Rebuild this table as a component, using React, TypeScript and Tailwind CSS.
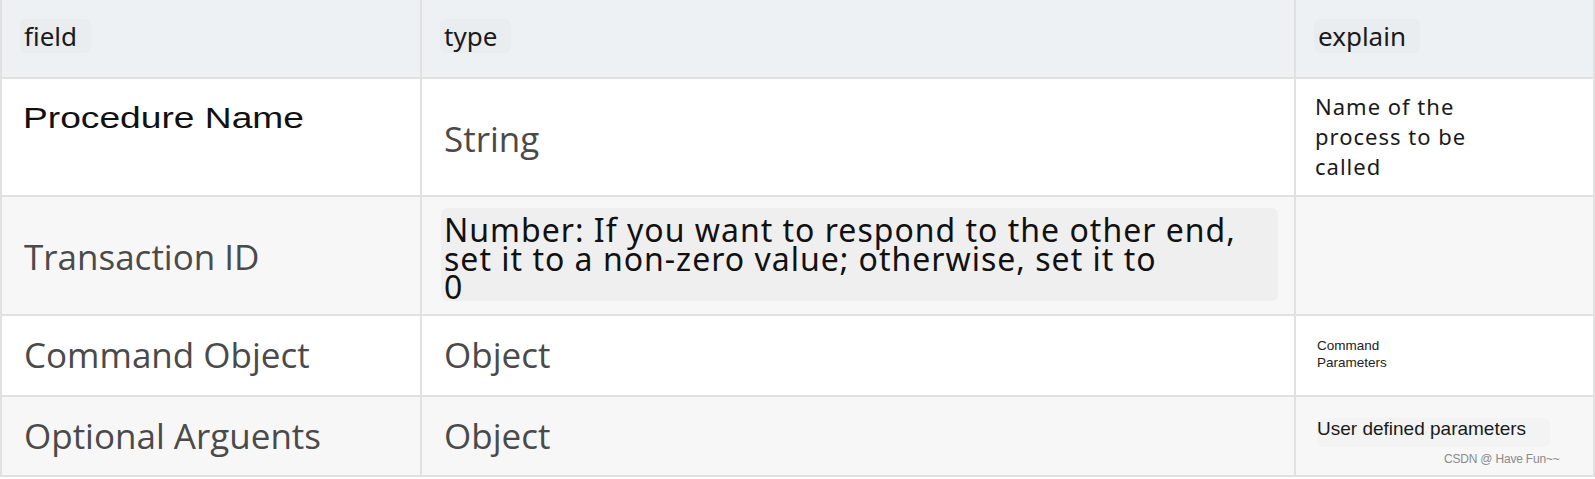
const grayText = "font-['Open_Sans',sans-serif] text-[35px] text-[#4a4a4a]";

function HeadCell({ label }: { label: string }) {
  return (
    <div className="flex items-center bg-[#eef1f4] pb-[5px] pl-[18px]">
      <span className="rounded-md bg-[#eaedf0] pl-[4px] pr-[14px] font-['Noto_Sans',sans-serif] text-[26px] leading-[34px] text-[#1a1a1a]">
        {label}
      </span>
    </div>
  );
}

export default function App() {
  return (
    <div className="h-[479px] w-[1595px] bg-white">
      <div className="grid w-[1595px] grid-cols-[418px_872px_297px] grid-rows-[77px_116px_117px_79px_78px] gap-[2px] bg-[#e1e1e1] px-[2px] pb-[2px]">
        <HeadCell label="field" />
        <HeadCell label="type" />
        <HeadCell label="explain" />

        {/* row 1 */}
        <div className="bg-white pl-[21px] pt-[24px]">
          <span className="inline-block origin-left scale-x-[1.26] font-['Liberation_Sans',sans-serif] text-[29.5px] leading-[29px] text-[#111]">
            Procedure Name
          </span>
        </div>
        <div className={`flex items-center bg-white pl-[22px] pt-[4px] ${grayText}`}>String</div>
        <div className="bg-white pl-[19px] pt-[12px] font-['Noto_Sans',sans-serif] text-[22px] leading-[30px] tracking-[1px] text-[#1a1a1a]">
          Name of the
          <br />
          process to be
          <br />
          called
        </div>

        {/* row 2 */}
        <div className={`flex items-center bg-[#f7f7f7] pl-[22px] pt-[3px] ${grayText}`}>Transaction ID</div>
        <div className="bg-[#f7f7f7] pb-[13px] pl-[19px] pr-[16px] pt-[11px]">
          <div className="h-full rounded-md bg-[#efefef] pl-[3px] pt-[8px] font-['Noto_Sans',sans-serif] text-[32px] leading-[28.5px] tracking-[1px] text-[#111]">
            Number: If you want to respond to the other end,
            <br />
            set it to a non-zero value; otherwise, set it to
            <br />0
          </div>
        </div>
        <div className="bg-[#f7f7f7]" />

        {/* row 3 */}
        <div className={`flex items-center bg-white pl-[22px] ${grayText}`}>Command Object</div>
        <div className={`flex items-center bg-white pl-[22px] ${grayText}`}>Object</div>
        <div className="bg-white pl-[21px] pt-[21px] font-['Liberation_Sans',sans-serif] text-[13.5px] leading-[17px] text-[#222]">
          Command
          <br />
          Parameters
        </div>

        {/* row 4 */}
        <div className={`flex items-center bg-[#f7f7f7] pl-[22px] ${grayText}`}>Optional Arguents</div>
        <div className={`flex items-center bg-[#f7f7f7] pl-[22px] ${grayText}`}>Object</div>
        <div className="relative bg-[#f7f7f7] pl-[21px] pt-[20px]">
          <span className="rounded-md bg-[#f3f3f3] pb-[8px] pr-[24px] font-['Liberation_Sans',sans-serif] text-[19px] leading-[24px] text-[#1a1a1a]">
            User defined parameters
          </span>
          <span className="absolute left-[148px] top-[55px] font-['Liberation_Sans',sans-serif] text-[12px] leading-[14px] tracking-[-0.2px] text-[#8a8a8a]">
            CSDN @ Have Fun~~
          </span>
        </div>
      </div>
    </div>
  );
}
